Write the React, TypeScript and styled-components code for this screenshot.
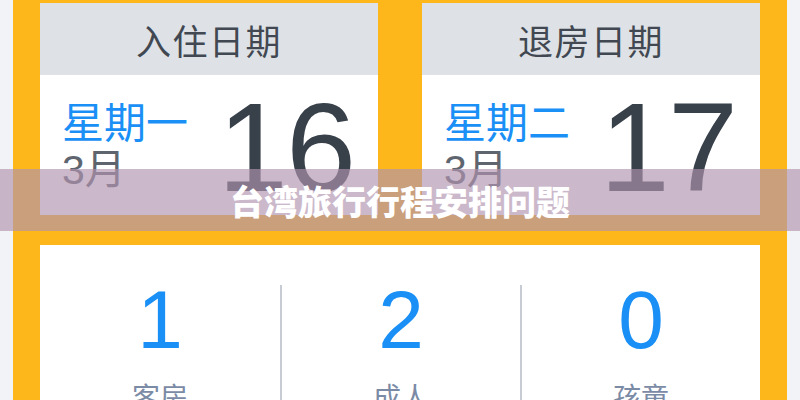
import React from 'react';
import styled, { createGlobalStyle } from 'styled-components';

const GlobalStyle = createGlobalStyle`
  html, body {
    margin: 0;
    padding: 0;
    background: #f2f3f6;
    font-family: 'Liberation Sans', 'Noto Sans CJK SC', sans-serif;
  }
`;

const Page = styled.div`
  position: relative;
  width: 800px;
  height: 400px;
  overflow: hidden;
  background: #f2f3f6;
`;

const Panel = styled.div`
  margin: 0 13px;
  padding: 3px 27px 0;
  height: 400px;
  box-sizing: border-box;
  background: #fdb71b;
`;

const DateRow = styled.div`
  display: grid;
  grid-template-columns: 1fr 1fr;
  column-gap: 44px;
`;

const DateCard = styled.div`
  display: flex;
  flex-direction: column;
  background: #fff;
`;

const CardHeader = styled.div`
  height: 72px;
  display: flex;
  align-items: center;
  justify-content: center;
  background: #dee2e7;
  color: #414851;
  font-size: 35px;
  letter-spacing: 1.5px;
`;

const CardBody = styled.div`
  height: 140px;
  display: flex;
  align-items: center;
  justify-content: space-between;
  padding: 0 24px 0 22px;
`;

const DayInfo = styled.div`
  display: flex;
  flex-direction: column;
  margin-top: 4px;
`;

const Weekday = styled.div`
  color: #1a8ff5;
  font-size: 42px;
  line-height: 46px;
`;

const Month = styled.div`
  color: #5e656f;
  font-size: 41px;
  line-height: 46px;
`;

const DayNumber = styled.div`
  color: #38404a;
  font-size: 126px;
  line-height: 126px;
  letter-spacing: -2px;
  margin-top: 6px;
`;

const GuestCard = styled.div`
  margin-top: 30px;
  display: grid;
  grid-template-columns: repeat(3, 1fr);
  background: #fff;
  padding-top: 34px;
  height: 200px;
`;

const GuestCell = styled.div<{ divider?: boolean }>`
  display: flex;
  flex-direction: column;
  align-items: center;
  border-left: ${p => (p.divider ? '2px solid #c7ccd4' : 'none')};
  margin-top: 6px;
`;

const GuestCount = styled.div`
  color: #1a8ff5;
  font-size: 82px;
  line-height: 82px;
  margin-top: -6px;
`;

const GuestLabel = styled.div`
  color: #7b8aa5;
  font-size: 28px;
  line-height: 34px;
  margin-top: 21px;
`;

const Caption = styled.div`
  position: absolute;
  left: 0;
  right: 0;
  top: 169px;
  height: 62px;
  display: flex;
  align-items: center;
  justify-content: center;
  background: rgba(176, 147, 175, 0.66);
  color: #fff;
  font-family: 'Noto Sans CJK SC', sans-serif;
  font-weight: 900;
  font-size: 34px;
`;

const dates = [
  { title: '入住日期', weekday: '星期一', month: '3月', day: '16' },
  { title: '退房日期', weekday: '星期二', month: '3月', day: '17' },
];

const guests = [
  { count: 1, label: '客房' },
  { count: 2, label: '成人' },
  { count: 0, label: '孩童' },
];

export default function App() {
  return (
    <Page>
      <GlobalStyle />
      <Panel>
        <DateRow>
          {dates.map(d => (
            <DateCard key={d.title}>
              <CardHeader>{d.title}</CardHeader>
              <CardBody>
                <DayInfo>
                  <Weekday>{d.weekday}</Weekday>
                  <Month>{d.month}</Month>
                </DayInfo>
                <DayNumber>{d.day}</DayNumber>
              </CardBody>
            </DateCard>
          ))}
        </DateRow>
        <GuestCard>
          {guests.map((g, i) => (
            <GuestCell key={g.label} divider={i > 0}>
              <GuestCount>{g.count}</GuestCount>
              <GuestLabel>{g.label}</GuestLabel>
            </GuestCell>
          ))}
        </GuestCard>
      </Panel>
      <Caption>台湾旅行行程安排问题</Caption>
    </Page>
  );
}
